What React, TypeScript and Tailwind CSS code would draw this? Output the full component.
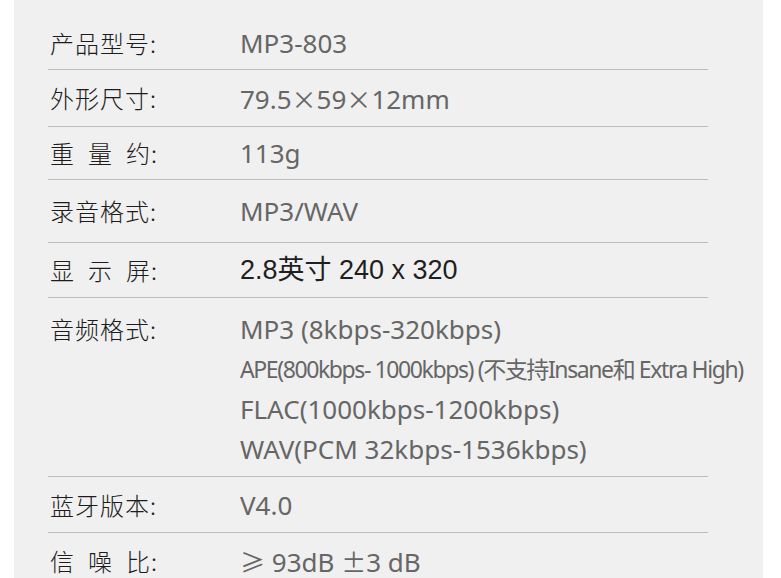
const FONT = "font-['Noto_Sans_CJK_SC','Noto_Sans',sans-serif]";
const VALUE = "font-['Noto_Sans','Noto_Sans_CJK_SC',sans-serif]";
const CJK = "font-['Noto_Sans_CJK_SC',sans-serif] text-[25px]";

interface Spec {
  label: string;
  value: React.ReactNode;
  h: string;
}

const X = <span className={CJK}>×</span>;

const specs: Spec[] = [
  { label: "产品型号:", value: "MP3-803", h: "h-[54px]" },
  { label: "外形尺寸:", value: <>79.5{X}59{X}12mm</>, h: "h-[57px]" },
  { label: "重\u2002量\u2002约:", value: "113g", h: "h-[53px]" },
  { label: "录音格式:", value: "MP3/WAV", h: "h-[63px]" },
  { label: "显\u2002示\u2002屏:", value: "2.8英寸 240 x 320", h: "h-[55px]" },
  { label: "音频格式:", value: null, h: "h-[179px]" },
  { label: "蓝牙版本:", value: "V4.0", h: "h-[56px]" },
  {
    label: "信\u2002噪\u2002比:",
    value: (
      <>
        <span className={CJK}>≥</span> 93dB <span className={CJK}>±</span>3 dB
      </>
    ),
    h: "h-[56px]",
  },
];

export default function App() {
  return (
    <div className={`w-[781px] h-[578px] overflow-hidden bg-white ${FONT}`}>
      <div className="ml-[14px] w-[749px] h-full bg-[#f0f0f0] pt-[16px]">
        <div className="ml-[34px] w-[660px]">
          {specs.map((s, i) => {
            const isAudio = i === 5;
            const isScreen = i === 4;
            return (
              <div
                key={i}
                className={`flex ${isAudio ? "items-start pt-[11px]" : "items-center"} ${s.h} ${
                  i < specs.length - 1 ? "border-b border-[#bdbdbd]" : ""
                }`}
              >
                <div className="w-[192px] shrink-0 pl-[2px] text-[24px] leading-[40px] text-[#1c1c1c] font-light tracking-[1px] whitespace-pre">
                  {s.label}
                </div>
                {isAudio ? (
                  <div className={`flex flex-col text-[#666] ${VALUE}`}>
                    <div className="text-[26px] leading-[40px]">MP3 (8kbps-320kbps)</div>
                    <div className="text-[23px] leading-[40px] tracking-[-1.4px] whitespace-nowrap">
                      APE(800kbps- 1000kbps) (不支持Insane和 Extra High)
                    </div>
                    <div className="text-[26px] leading-[40px]">FLAC(1000kbps-1200kbps)</div>
                    <div className="text-[26px] leading-[40px]">WAV(PCM 32kbps-1536kbps)</div>
                  </div>
                ) : isScreen ? (
                  <div className="text-[27px] leading-[40px] text-[#1f1f1f] font-['Liberation_Sans','Noto_Sans_CJK_SC',sans-serif]">
                    {s.value}
                  </div>
                ) : (
                  <div className={`text-[26px] leading-[40px] text-[#666] whitespace-nowrap ${VALUE}`}>
                    {s.value}
                  </div>
                )}
              </div>
            );
          })}
        </div>
      </div>
    </div>
  );
}
